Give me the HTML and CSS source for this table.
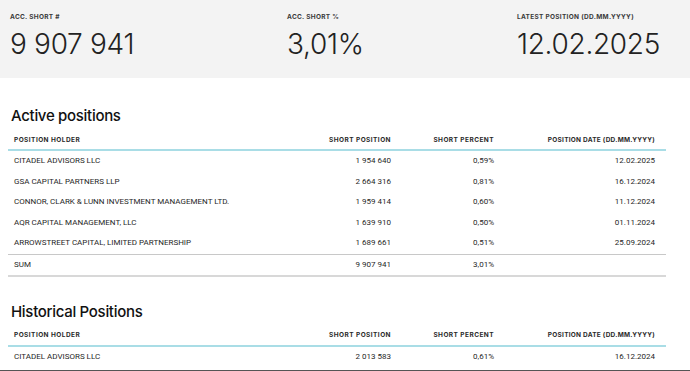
FILE: index.html
```html
<!DOCTYPE html>
<html>
<head>
<meta charset="utf-8">
<link rel="stylesheet" href="styles.css">
</head>
<body>
<div class="summary">
  <div class="stat stat-1">
    <div class="stat-label">ACC. SHORT #</div>
    <div class="stat-value">9 907 941</div>
  </div>
  <div class="stat stat-2">
    <div class="stat-label">ACC. SHORT %</div>
    <div class="stat-value">3,01%</div>
  </div>
  <div class="stat stat-3">
    <div class="stat-label">LATEST POSITION (DD.MM.YYYY)</div>
    <div class="stat-value">12.02.2025</div>
  </div>
</div>

<div class="content">
  <h2 class="section-title">Active positions</h2>
  <table class="positions">
    <colgroup><col class="c1"><col class="c2"><col class="c3"><col class="c4"></colgroup>
    <thead>
      <tr><th class="l">POSITION HOLDER</th><th>SHORT POSITION</th><th>SHORT PERCENT</th><th class="d">POSITION DATE (DD.MM.YYYY)</th></tr>
    </thead>
    <tbody>
      <tr><td class="l">CITADEL ADVISORS LLC</td><td>1 954 640</td><td>0,59%</td><td class="d">12.02.2025</td></tr>
      <tr><td class="l">GSA CAPITAL PARTNERS LLP</td><td>2 664 316</td><td>0,81%</td><td class="d">16.12.2024</td></tr>
      <tr><td class="l">CONNOR, CLARK &amp; LUNN INVESTMENT MANAGEMENT LTD.</td><td>1 959 414</td><td>0,60%</td><td class="d">11.12.2024</td></tr>
      <tr><td class="l">AQR CAPITAL MANAGEMENT, LLC</td><td>1 639 910</td><td>0,50%</td><td class="d">01.11.2024</td></tr>
      <tr class="last"><td class="l">ARROWSTREET CAPITAL, LIMITED PARTNERSHIP</td><td>1 689 661</td><td>0,51%</td><td class="d">25.09.2024</td></tr>
    </tbody>
    <tfoot>
      <tr><td class="l">SUM</td><td>9 907 941</td><td>3,01%</td><td class="d"></td></tr>
    </tfoot>
  </table>

  <h2 class="section-title hist">Historical Positions</h2>
  <table class="positions">
    <colgroup><col class="c1"><col class="c2"><col class="c3"><col class="c4"></colgroup>
    <thead>
      <tr><th class="l">POSITION HOLDER</th><th>SHORT POSITION</th><th>SHORT PERCENT</th><th class="d">POSITION DATE (DD.MM.YYYY)</th></tr>
    </thead>
    <tbody>
      <tr><td class="l">CITADEL ADVISORS LLC</td><td>2 013 583</td><td>0,61%</td><td class="d">16.12.2024</td></tr>
    </tbody>
  </table>
</div>
<div class="bottom-rule"></div>
</body>
</html>
```

FILE: styles.css
```css
html, body {
  margin: 0;
  padding: 0;
  background: #fff;
  font-family: Inter, "Noto Sans", sans-serif;
  color: #222;
}

.summary {
  background: #f3f3f3;
  height: 78px;
  display: flex;
  padding-left: 10px;
  box-sizing: border-box;
}

.stat { padding-top: 13px; }
.stat-1 { width: 277px; }
.stat-2 { width: 230px; }
.stat-3 { flex: 1; }

.stat-label {
  font-size: 6.5px;
  font-weight: 700;
  letter-spacing: 0.3px;
  color: #3a3a3a;
  line-height: 9px;
}

.stat-value {
  font-size: 28px;
  font-weight: 300;
  color: #222;
  line-height: 34px;
  margin-top: 5px;
  letter-spacing: -0.3px;
}

.content {
  padding: 0 24px 0 8px;
}

.section-title {
  margin: 27px 0 2px 3px;
  font-size: 15px;
  font-weight: 500;
  line-height: 22px;
  color: #111;
  letter-spacing: -0.3px;
}

.section-title.hist { margin-top: 24px; }

.positions {
  width: 658px;
  border-collapse: collapse;
  table-layout: fixed;
}

.c1 { width: 242px; }
.c2 { width: 147px; }
.c3 { width: 103px; }
.c4 { width: 166px; }

.positions th {
  font-size: 6.5px;
  font-weight: 700;
  letter-spacing: 0.45px;
  color: #2a2a2a;
  text-align: right;
  padding: 1px 6px 0;
  height: 19px;
  border-bottom: 2px solid #a9dde6;
}

.positions th.d { letter-spacing: 0.25px; }

.positions td {
  font-family: Roboto, "Noto Sans", sans-serif;
  font-size: 8px;
  color: #1f1f1f;
  text-align: right;
  padding: 0 6px 1px;
  height: 19.5px;
  white-space: nowrap;
}

.positions .l { text-align: left; }
.positions .d { padding-right: 11px; }

.positions tr.last td { border-bottom: 1px solid #c8c8c8; }
.positions tfoot td { border-bottom: 2px solid #d8d8d8; height: 19px; }

.bottom-rule {
  border-top: 3px solid #555;
  margin-top: 3px;
}
```
